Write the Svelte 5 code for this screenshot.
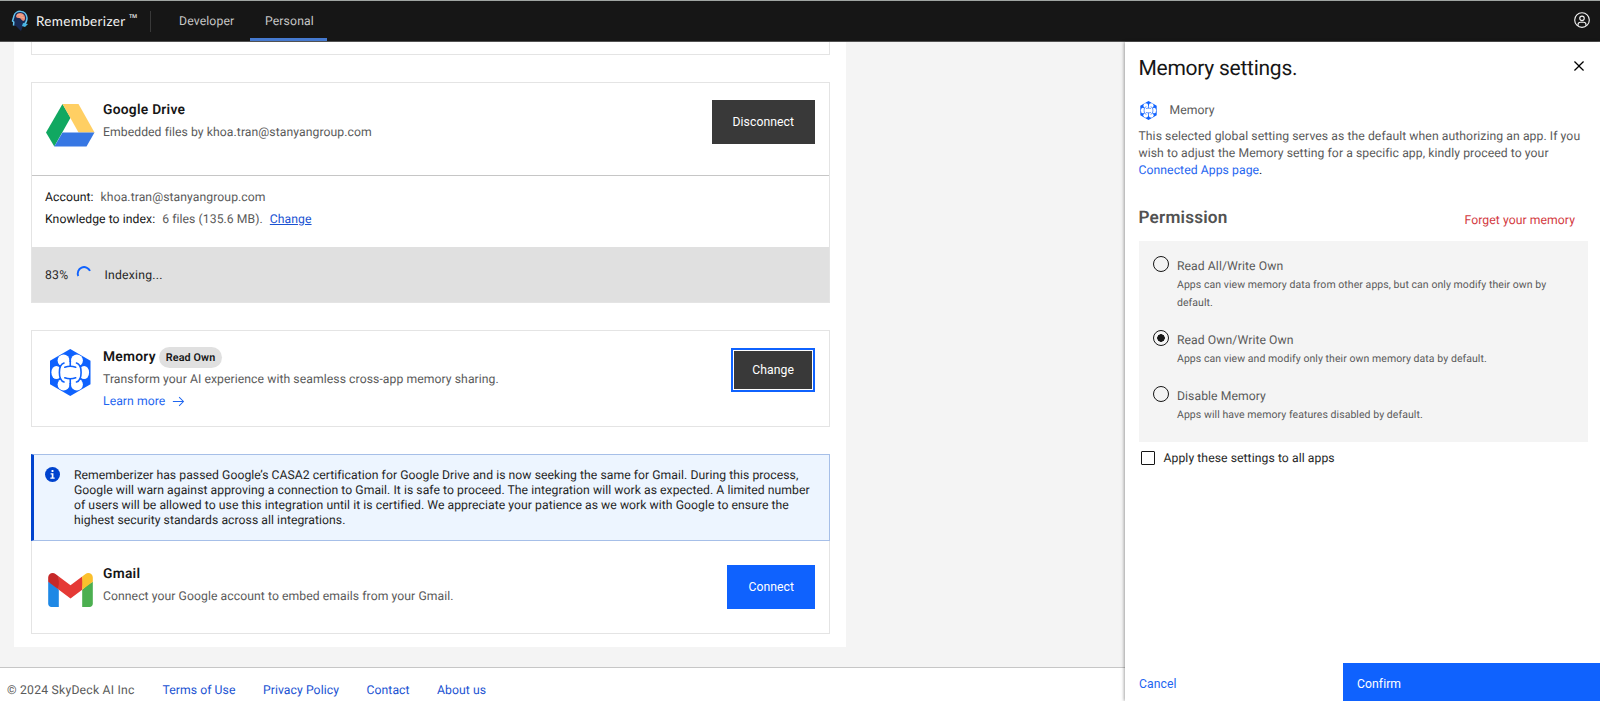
<script lang="ts">
    type Permission = { id: string; label: string; description: string };

    const permissions: Permission[] = [
        {
            id: 'read_all',
            label: 'Read All/Write Own',
            description: 'Apps can view memory data from other apps, but can only modify their own by default.'
        },
        {
            id: 'read_own',
            label: 'Read Own/Write Own',
            description: 'Apps can view and modify only their own memory data by default.'
        },
        {
            id: 'disabled',
            label: 'Disable Memory',
            description: 'Apps will have memory features disabled by default.'
        }
    ];

    const footer_links = ['Terms of Use', 'Privacy Policy', 'Contact', 'About us'];

    let selected = $state('read_own');
    let apply_all = $state(false);
</script>

{#snippet memory_icon()}
    <svg class="memory_icon" viewBox="0 0 40.5 47">
        <path fill="#0f62fe" d="M20.25 0 40.5 11.7v23.6L20.25 47 0 35.3V11.7z" />
        <g fill="#fff">
            <circle cx="13.6" cy="11.5" r="6" />
            <circle cx="26.9" cy="11.5" r="6" />
            <ellipse cx="6.4" cy="23.5" rx="5" ry="6.6" />
            <ellipse cx="34.1" cy="23.5" rx="5" ry="6.6" />
            <circle cx="13.6" cy="35.5" r="6" />
            <circle cx="26.9" cy="35.5" r="6" />
            <rect x="9.4" y="13" width="21.7" height="21" rx="9" />
        </g>
        <g fill="none" stroke="#0f62fe" stroke-width="1.6" stroke-linecap="round">
            <path d="M20.25 6v11.3M20.25 29.7V41" />
            <path d="M14.8 18.2q5.4-2 10.9 0M14.8 28.8q5.4 2 10.9 0" />
            <path d="M14 14c-3.4 1-4.6 5-4.6 9.5S10.6 32 14 33M26.5 14c3.4 1 4.6 5 4.6 9.5S29.9 32 26.5 33" />
        </g>
    </svg>
{/snippet}

<div class="app">
    <header>
        <svg class="logo" viewBox="0 0 18 22">
            <path fill="#182a55" d="M3 4C6-1 16 0 16 8c0 4-1 6-4 8l-2 5-5-5H2l1-4-2-1 2-3z" />
            <path fill="none" stroke="#63c3ee" stroke-width="1.5" d="M3 6C4 0 15-1 16 8c0 4-1 5-3 7M3 6 1.5 11l1.3 1-.3 3.5" />
            <path fill="#e88b78" d="M5 6c1-4 8-4 9 1 .5 3-1 4-2 4-2-1-2-3-4-3-1 0-3 0-3-2z" />
            <path fill="none" stroke="#f5c19b" stroke-width=".8" d="M6 5c3-1 4 1 6 0M8 7c2 0 3 0 5 1" />
            <path fill="#48b5e6" d="m12 13 5 1-3 3-3-1z" />
        </svg>
        <span class="brand">Rememberizer</span><span class="tm">™</span>
        <span class="divider"></span>
        <nav>
            <a href="#developer">Developer</a>
            <a href="#personal" class="current">Personal</a>
        </nav>
        <svg class="avatar" viewBox="0 0 32 32" fill="none" stroke="#f4f4f4" stroke-width="2">
            <circle cx="16" cy="16" r="13" />
            <circle cx="16" cy="13" r="4" />
            <path d="M9 26v-2a4 4 0 0 1 4-4h6a4 4 0 0 1 4 4v2" />
        </svg>
    </header>

    <main>
        <div class="panel">
            <section class="card previous"></section>

            <section class="card drive">
                <div class="integration">
                    <svg class="drive_icon" viewBox="0 0 48.5 42.5">
                        <path fill="#11a861" d="M16.5 0 24.5 13.7 8.3 42.5 0 28.4z" />
                        <path fill="#ffcf63" d="M16.5 0h16l16 28.4h-16z" />
                        <path fill="#3777e3" d="M16.5 28.4h32l-8 14.1H8.3z" />
                    </svg>
                    <div class="info">
                        <h3>Google Drive</h3>
                        <p>Embedded files by khoa.tran@stanyangroup.com</p>
                    </div>
                    <button class="dark">Disconnect</button>
                </div>
                <div class="details">
                    <div><span class="label">Account:</span><span>khoa.tran@stanyangroup.com</span></div>
                    <div><span class="label">Knowledge to index:</span><span>6 files (135.6 MB).</span><a href="#change">Change</a></div>
                </div>
                <div class="progress">
                    <span>83%</span>
                    <svg viewBox="0 0 16 16" fill="none" stroke="#0f62fe" stroke-width="1.9">
                        <path d="M2.3 11A6.3 6.3 0 0 1 14 5.9" />
                    </svg>
                    <span>Indexing...</span>
                </div>
            </section>

            <section class="card memory">
                <div class="integration">
                    {@render memory_icon()}
                    <div class="info">
                        <h3>Memory <span class="tag">Read Own</span></h3>
                        <p>Transform your AI experience with seamless cross-app memory sharing.</p>
                        <a href="#learn" class="learn">
                            Learn more
                            <svg viewBox="0 0 32 32"><path fill="currentColor" d="M18 6l-1.43 1.393L24.15 15H4v2h20.15l-7.58 7.573L18 26l10-10z" /></svg>
                        </a>
                    </div>
                    <button class="dark focused">Change</button>
                </div>
            </section>

            <section class="card gmail">
                <div class="notice">
                    <svg viewBox="0 0 16 16">
                        <circle cx="8" cy="8" r="8" fill="#0043ce" />
                        <path fill="#fff" d="M7 3.3h2v1.9H7zM6 6.6h3v4.6h1.3v1.4H5.7v-1.4h1.5V8H6z" />
                    </svg>
                    <p>
                        <span>Rememberizer has passed Google’s CASA2 certification for Google Drive and is now seeking the same for Gmail. During this process,</span>
                        <span>Google will warn against approving a connection to Gmail. It is safe to proceed. The integration will work as expected. A limited number</span>
                        <span>of users will be allowed to use this integration until it is certified. We appreciate your patience as we work with Google to ensure the</span>
                        <span>highest security standards across all integrations.</span>
                    </p>
                </div>
                <div class="integration">
                    <svg class="gmail_icon" viewBox="3 8 42 32">
                        <path fill="#4caf50" d="M45 16.2l-5 2.75-5 4.75V40h7c1.657 0 3-1.343 3-3z" />
                        <path fill="#1e88e5" d="M3 16.2l3.614 1.71L13 23.7V40H6c-1.657 0-3-1.343-3-3z" />
                        <path fill="#e53935" d="M35 11.2l-11 8.25-11-8.25-1 5.8 1 6.7 11 8.25 11-8.25 1-6.7z" />
                        <path fill="#c62828" d="M3 12.298V16.2l10 7.5V11.2L9.876 8.859A4.3 4.3 0 0 0 7.298 8 4.298 4.298 0 0 0 3 12.298z" />
                        <path fill="#fbc02d" d="M45 12.298V16.2l-10 7.5V11.2l3.124-2.341A4.3 4.3 0 0 1 40.702 8 4.298 4.298 0 0 1 45 12.298z" />
                    </svg>
                    <div class="info">
                        <h3>Gmail</h3>
                        <p>Connect your Google account to embed emails from your Gmail.</p>
                    </div>
                    <button class="primary">Connect</button>
                </div>
            </section>
        </div>
    </main>

    <footer>
        <span>© 2024 SkyDeck AI Inc</span>
        {#each footer_links as link}
            <a href="#footer">{link}</a>
        {/each}
    </footer>

    <aside>
        <div class="drawer_body">
            <div class="drawer_head">
                <h2>Memory settings.</h2>
                <button class="close" aria-label="Close">
                    <svg viewBox="0 0 32 32"><path d="M17.414 16 24 9.414 22.586 8 16 14.586 9.414 8 8 9.414 14.586 16 8 22.586 9.414 24 16 17.414 22.586 24 24 22.586z" /></svg>
                </button>
            </div>
            <div class="drawer_source">
                {@render memory_icon()}
                <span>Memory</span>
            </div>
            <p class="hint">
                This selected global setting serves as the default when authorizing an app. If you<br />
                wish to adjust the Memory setting for a specific app, kindly proceed to your<br />
                <a href="#apps">Connected Apps page</a><b>.</b>
            </p>
            <div class="permission_head">
                <h4>Permission</h4>
                <a href="#forget">Forget your memory</a>
            </div>
            <div class="options">
                {#each permissions as p}
                    <label>
                        <input type="radio" name="permission" value={p.id} bind:group={selected} />
                        <span class="option_text">
                            <span>{p.label}</span>
                            <small>{p.description}</small>
                        </span>
                    </label>
                {/each}
            </div>
            <label class="apply">
                <input type="checkbox" bind:checked={apply_all} />
                <span>Apply these settings to all apps</span>
            </label>
        </div>
        <div class="drawer_actions">
            <button class="cancel">Cancel</button>
            <button class="confirm">Confirm</button>
        </div>
    </aside>
</div>

<style>
    :global(body) {
        overflow: hidden;
    }
    .app {
        position: relative;
        height: 701px;
        overflow: hidden;
        display: flex;
        flex-direction: column;
        box-sizing: border-box;
        background-color: #f4f4f4;
        color: #5a5a5a;
        font-family: Roboto, "Liberation Sans", sans-serif;
        font-size: 12.2px;
        line-height: 22px;
        letter-spacing: 0.07px;
        text-rendering: geometricPrecision;
    }
    .app * {
        box-sizing: border-box;
    }
    h2, h3, h4, p {
        margin: 0;
    }
    svg {
        display: block;
        flex: none;
    }
    a {
        color: #1f66f0;
        text-decoration: none;
    }
    button {
        border: none;
        padding: 0;
        font: inherit;
        letter-spacing: inherit;
    }

    header {
        height: 42px;
        flex: none;
        display: flex;
        align-items: center;
        padding: 0 9px 0 11px;
        background-color: #161616;
        border-top: 1px solid #a0a5a2;
        border-bottom: 1px solid #525252;
    }
    .logo {
        width: 18px;
        height: 22px;
        margin-right: 7px;
    }
    .brand {
        width: 93px;
        color: #f4f4f4;
        font-family: Lato, sans-serif;
        font-size: 13.5px;
        letter-spacing: 0.34px;
    }
    .tm {
        width: 14px;
        color: #f4f4f4;
        font-family: "Open Sans", sans-serif;
        font-size: 11px;
        line-height: 14px;
        margin: -4px 0 0 0;
    }
    .divider {
        width: 1px;
        height: 21px;
        margin: 0 13px 0 7px;
        background-color: #393939;
    }
    nav {
        display: flex;
        align-self: stretch;
    }
    nav a {
        width: 86px;
        padding: 9px 0 0 15px;
        color: #c6c6c6;
        letter-spacing: 0.14px;
    }
    nav a.current {
        width: 77px;
        border-bottom: 3px solid #4579cf;
    }
    .avatar {
        width: 18px;
        height: 18px;
        margin: -2px 0 0 auto;
    }

    main {
        height: 625px;
        padding-left: 14px;
        flex: none;
    }
    .panel {
        width: 832px;
        height: 605px;
        padding: 0 16px 0 17px;
        background-color: #fff;
    }
    .card {
        border: 1px solid #e4e4e4;
        margin-bottom: 27px;
    }
    .card.previous {
        height: 13px;
        border-top: none;
    }
    .integration {
        display: flex;
        align-items: flex-start;
        padding: 17px 14px 0 14px;
    }
    .info {
        flex: 1;
    }
    h3 {
        display: flex;
        align-items: center;
        height: 20px;
        color: #161616;
        font-size: 13.8px;
        font-weight: 600;
        line-height: 18px;
        letter-spacing: 0.26px;
    }
    .info p {
        padding-top: 1px;
        white-space: nowrap;
    }
    .integration button {
        height: 44px;
        padding: 0 21px;
        color: #fff;
        letter-spacing: 0.06px;
    }
    .dark {
        background-color: #393939;
    }
    .primary {
        background-color: #0f62fe;
    }
    .focused {
        border: 2px solid #0f62fe;
        box-shadow: inset 0 0 0 1px #fff;
    }
    .integration .focused {
        padding: 0 19px;
    }

    .drive .integration {
        height: 92px;
    }
    .drive_icon {
        width: 48.5px;
        height: 42.5px;
        margin: 4px 8.5px 0 0;
    }
    .details {
        height: 72px;
        padding: 10px 13px;
        border-top: 1px solid #c6c6c6;
    }
    .details .label {
        color: #161616;
        margin-right: 7px;
    }
    .details a {
        margin-left: 7px;
        color: #1a52d2;
        text-decoration: underline;
    }
    .progress {
        display: flex;
        height: 55px;
        padding: 17px 13px;
        background-color: #e0e0e0;
        color: #262626;
        letter-spacing: 0.25px;
    }
    .progress svg {
        width: 16px;
        height: 16px;
        margin: 1px 12px 0 8px;
    }

    .memory {
        height: 97px;
    }
    .memory .info, .gmail .info {
        margin-top: -1px;
    }
    .memory .memory_icon {
        width: 40.5px;
        height: 47px;
        margin: 1px 12.5px 0 4px;
    }
    .tag {
        height: 21px;
        margin-left: 3px;
        padding: 2px 7px 0;
        border-radius: 11px;
        background-color: #e0e0e0;
        font-size: 10.8px;
        letter-spacing: 0.1px;
    }
    .learn {
        display: flex;
        align-items: center;
    }
    .learn svg {
        width: 15px;
        height: 15px;
        margin-left: 6px;
    }

    .gmail {
        height: 180px;
        border-top: none;
        margin: 0;
    }
    .notice {
        display: flex;
        height: 87px;
        margin: 0 -1px;
        padding: 12px 0 0 12px;
        border: 1px solid #a6bfe8;
        border-left: 3px solid #0043ce;
        background-color: #edf5ff;
        color: #262626;
        line-height: 15.3px;
        letter-spacing: 0.05px;
    }
    .notice svg {
        width: 15px;
        height: 15px;
        margin: 0 14px 0 -1px;
    }
    .notice p {
        padding-top: 0.6px;
    }
    .notice span {
        display: block;
        white-space: nowrap;
    }
    .gmail .integration {
        padding-top: 24px;
    }
    .gmail_icon {
        width: 45px;
        height: 34px;
        margin: 8px 10px 0 2px;
    }

    footer {
        flex: 1;
        display: flex;
        padding: 11px 7px 0;
        gap: 27.5px;
        background-color: #fff;
        border-top: 1px solid #c6c6c6;
    }
    footer span {
        width: 128px;
        letter-spacing: 0.22px;
    }
    footer a {
        color: #1a52d2;
    }

    aside {
        position: absolute;
        top: 42px;
        right: 0;
        bottom: 0;
        width: 475px;
        display: flex;
        flex-direction: column;
        background-color: #fff;
        box-shadow: -1px 0 3px rgba(0, 0, 0, 0.35);
    }
    .drawer_body {
        flex: 1;
        padding: 0 12px 0 13.5px;
    }
    .drawer_head {
        display: flex;
        justify-content: space-between;
        height: 55px;
    }
    h2 {
        padding-top: 13px;
        color: #161616;
        font-size: 21px;
        font-weight: 400;
        line-height: 28px;
        letter-spacing: -0.26px;
    }
    .close {
        height: 20px;
        margin: 14px -1px 0 0;
        background: none;
    }
    .close svg {
        width: 20px;
        height: 20px;
    }
    .drawer_source {
        display: flex;
        align-items: center;
        height: 26px;
    }
    .drawer_source .memory_icon {
        width: 17px;
        height: 19px;
        margin: 0 13px 0 1px;
    }
    .hint {
        height: 72px;
        line-height: 17.2px;
        white-space: nowrap;
        padding-top: 5px;
    }
    .hint b {
        color: #161616;
        font-weight: 400;
    }
    .permission_head {
        display: flex;
        justify-content: space-between;
        height: 46px;
        padding: 11px 13px 0 0;
    }
    h4 {
        color: #525252;
        font-size: 17.2px;
        font-weight: 600;
        line-height: 24px;
        letter-spacing: 0.18px;
    }
    .permission_head a {
        padding-top: 3px;
        color: #d33a42;
    }
    .options {
        height: 201px;
        padding: 14px 15px 0 14.5px;
        background-color: #f4f4f4;
    }
    .options label {
        display: flex;
        margin-bottom: 16px;
    }
    .option_text > span {
        display: block;
        line-height: 21px;
        padding-top: 1px;
    }
    small {
        display: block;
        width: 380px;
        font-size: 10.5px;
        line-height: 18px;
        letter-spacing: 0.06px;
        margin: -1px 0 1px;
    }
    input {
        appearance: none;
        flex: none;
        margin: 0;
        border: 1px solid #161616;
    }
    input[type='radio'] {
        width: 16px;
        height: 16px;
        margin: 1px 8px 0 0;
        border-radius: 50%;
    }
    input[type='radio']:checked {
        background: radial-gradient(circle, #161616 3.5px, transparent 4px);
    }
    .apply {
        display: flex;
        align-items: center;
        margin-top: 5px;
        color: #262626;
    }
    .apply input {
        width: 14px;
        height: 14px;
        margin: 0 9px 0 2px;
        border-radius: 1px;
    }
    .drawer_actions {
        display: flex;
        height: 38px;
    }
    .drawer_actions button {
        padding: 3px 14px 0;
        text-align: left;
    }
    .cancel {
        flex: 1;
        background: none;
        color: #1f66f0;
    }
    .confirm {
        width: 257px;
        background-color: #0f62fe;
        color: #fff;
    }
</style>
